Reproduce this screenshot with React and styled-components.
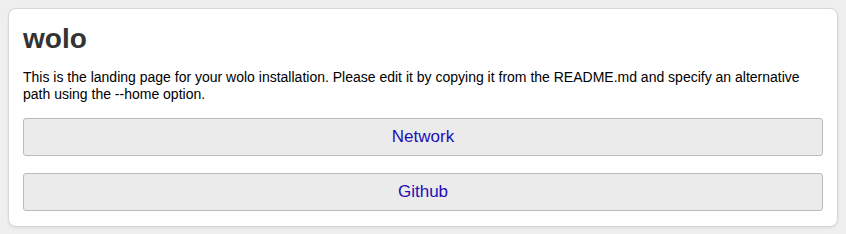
import React from 'react';
import styled, { createGlobalStyle } from 'styled-components';

const GlobalStyle = createGlobalStyle`
    body {
        margin: 0;
        background: #efefef;
        font-family: "Liberation Sans", Arial, sans-serif;
    }
`;

const Page = styled.div`
    padding: 8px;
`;

const Card = styled.div`
    background: #fff;
    border: 1px solid #d6d6d6;
    border-radius: 8px;
    box-shadow: 0 1px 3px rgba(0, 0, 0, 0.08);
    padding: 10px 14px 15px;
`;

const Title = styled.h1`
    margin: 0 0 10px;
    font-size: 28px;
    font-weight: bold;
    color: #333;
    line-height: 40px;
`;

const Text = styled.p`
    margin: 0 0 15px;
    font-size: 14px;
    line-height: 17px;
    color: #000;
`;

const Links = styled.div`
    display: flex;
    flex-direction: column;
    gap: 17px;
`;

const LinkButton = styled.a`
    display: flex;
    align-items: center;
    justify-content: center;
    height: 36px;
    background: #ebebeb;
    border: 1px solid #bbb;
    border-radius: 3px;
    color: #1d0fb5;
    font-size: 17px;
    text-decoration: none;
`;

const App = () => {
    return (
        <>
            <GlobalStyle />
            <Page>
                <Card>
                    <Title>wolo</Title>
                    <Text>
                        This is the landing page for your wolo installation. Please edit it by copying it from the README.md and specify an alternative path using the --home option.
                    </Text>
                    <Links>
                        <LinkButton href="#">Network</LinkButton>
                        <LinkButton href="#">Github</LinkButton>
                    </Links>
                </Card>
            </Page>
        </>
    );
};

export default App;
